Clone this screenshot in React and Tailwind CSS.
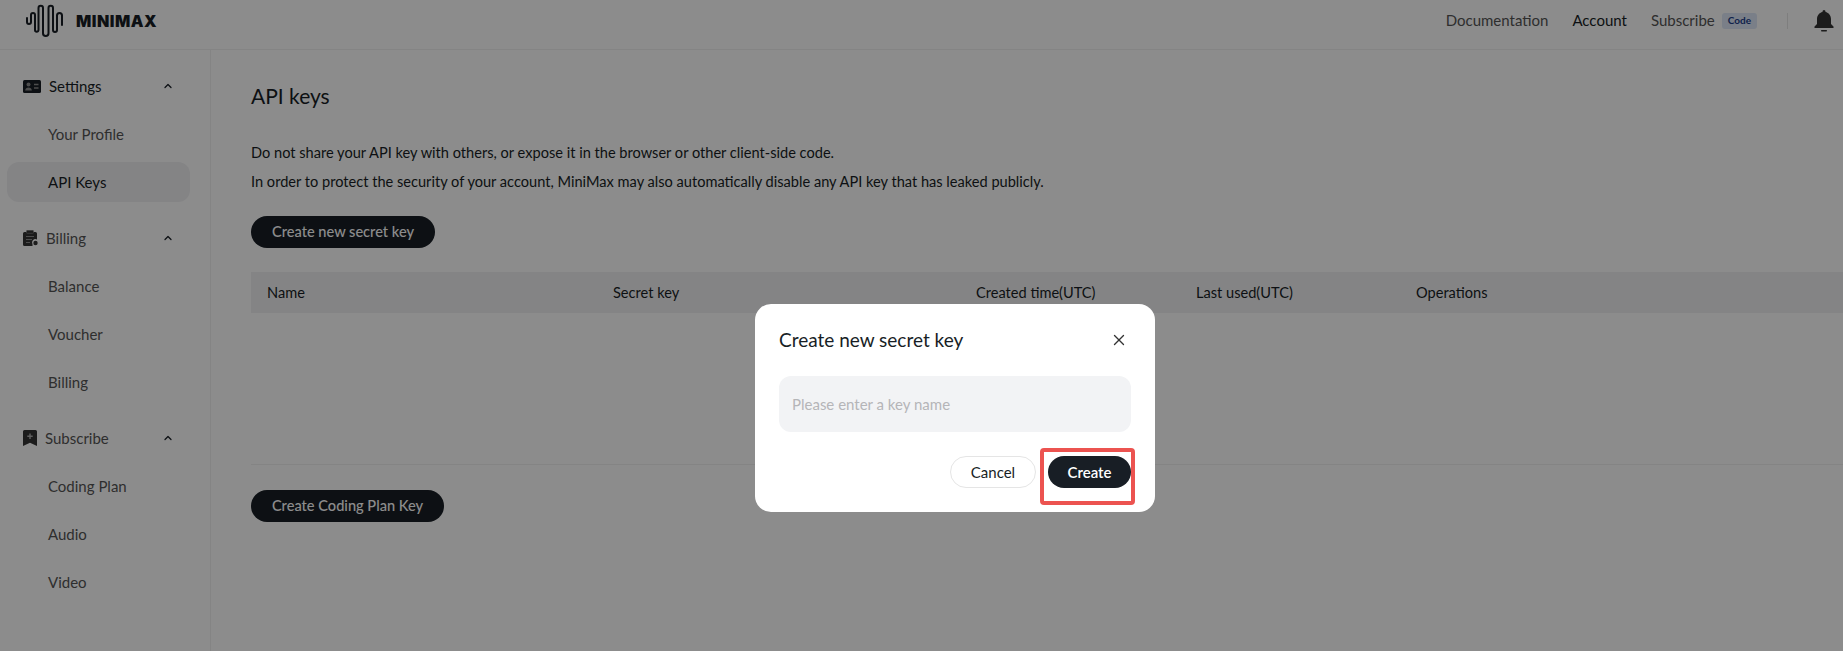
import React from 'react';
import { ChevronUp, X } from 'lucide-react';

const FONT = "font-['Lato','Noto_Sans',sans-serif]";

// Wave logo mark drawn as one serpentine line
function LogoMark() {
  return (
    <svg width="38" height="34" viewBox="0 0 38 34" fill="none" stroke="#181e25" strokeWidth="2" strokeLinecap="round" strokeLinejoin="round">
      <path d="M1 14v4a2 2 0 0 0 4 0v-7a2 2 0 0 1 4 0v15a1.750 1.750 0 0 0 3.500 0V4a2.250 2.250 0 0 1 4.500 0v25.250a2.750 2.750 0 0 0 5.500 0V4a2.250 2.250 0 0 1 4.500 0v22a2 2 0 0 0 4 0V11.500a2.500 2.500 0 0 1 5 0V21" />
    </svg>
  );
}

function IdIcon() {
  return (
    <svg width="18" height="13" viewBox="0 0 18 13">
      <rect width="18" height="13" rx="1.500" fill="#181e25" />
      <circle cx="5.500" cy="4.500" r="2" fill="#8c8c8c" />
      <path d="M2.200 10.500c0-2 1.500-3 3.300-3s3.300 1 3.300 3z" fill="#8c8c8c" />
      <path d="M11 4.500h4.500M11 8h4.500" stroke="#8c8c8c" strokeWidth="1.400" />
    </svg>
  );
}

function BillIcon() {
  return (
    <svg width="15" height="16" viewBox="0 0 15 16">
      <path d="M1.500 2h11A1.500 1.500 0 0 1 14 3.500v6a3.500 3.500 0 0 0-4.500 5V16h-8A1.500 1.500 0 0 1 0 14.500v-11A1.500 1.500 0 0 1 1.500 2z" fill="#333" />
      <rect x="3.500" y="0.300" width="7" height="3" rx="0.800" fill="#333" stroke="#8c8c8c" strokeWidth="0.600" />
      <path d="M3 6.500h8M3 9.500h6M3 12.500h4" stroke="#8c8c8c" strokeWidth="1.200" />
      <circle cx="12.500" cy="13" r="2.200" fill="#333" />
    </svg>
  );
}

function BookmarkPlus() {
  return (
    <svg width="14" height="16" viewBox="0 0 14 16">
      <path d="M1.500 0h11A1.500 1.500 0 0 1 14 1.500V16l-7-3.200L0 16V1.500A1.500 1.500 0 0 1 1.500 0z" fill="#333" />
      <path d="M7 3.500v5.500M4.300 6.200h5.400" stroke="#b0b0b0" strokeWidth="1.400" />
    </svg>
  );
}

function Bell() {
  return (
    <svg width="20" height="22" viewBox="0 0 20 22" fill="#333">
      <path d="M10 0a1.500 1.500 0 0 1 1.500 1.500v.4C14.700 2.600 17 5.300 17 9v5l2.500 2.500V18H.5v-1.500L3 14V9c0-3.700 2.300-6.400 5.500-7.100v-.4A1.500 1.500 0 0 1 10 0z" />
      <rect x="7" y="20" width="6" height="1.500" rx="0.700" />
    </svg>
  );
}

function SideGroup({ icon, label, dark, items }) {
  return (
    <div className="mb-[16px]">
      <div className="h-[40px] mb-[8px] flex items-center pl-[23px] pr-[36px]">
        <div className="flex items-center flex-1 gap-[8px]">
          {icon}
          <span className={`text-[15px] ${dark ? 'text-[#181e25]' : 'text-[#555]'}`}>{label}</span>
        </div>
        <ChevronUp size={12} strokeWidth={2.500} className="text-[#181e25]" />
      </div>
      {items.map((it) => (
        <div
          key={it}
          className={`h-[40px] mb-[8px] mx-[7px] w-[183px] rounded-[12px] pl-[41px] flex items-center text-[15px] ${it === 'API Keys' ? 'bg-[#f0f0f3] text-[#181e25]' : 'text-[#555]'}`}
        >
          {it}
        </div>
      ))}
    </div>
  );
}

export default function App() {
  return (
    <div className={`relative h-[651px] w-[1843px] overflow-hidden bg-white text-[#181e25] ${FONT}`}>
      <header className="h-[50px] border-b border-[#f0f0f0] flex items-center pl-[26px] pr-[9px] pb-[8px]">
        <LogoMark />
        <span className="ml-[12px] text-[16px] font-black tracking-[0.5px] font-['Inter',sans-serif]">MINIMAX</span>
        <nav className="ml-auto flex items-center text-[15px]">
          <span className="text-[#555]">Documentation</span>
          <span className="ml-[24px]">Account</span>
          <span className="ml-[24px] text-[#555]">Subscribe</span>
          <span className="ml-[7px] h-[16px] px-[6px] rounded-[3px] bg-[#dfe8f8] text-[#1c3f8a] text-[10px] font-bold flex items-center">Code</span>
          <span className="ml-[30px] w-px h-[16px] bg-[#e5e5e5]" />
          <span className="ml-[26px] flex"><Bell /></span>
        </nav>
      </header>

      <div className="flex h-[601px]">
        <aside className="w-[211px] shrink-0 border-r border-[#f0f0f0] pt-[16px]">
          <SideGroup icon={<IdIcon />} label="Settings" dark items={['Your Profile', 'API Keys']} />
          <SideGroup icon={<BillIcon />} label="Billing" items={['Balance', 'Voucher', 'Billing']} />
          <SideGroup icon={<BookmarkPlus />} label="Subscribe" items={['Coding Plan', 'Audio', 'Video']} />
        </aside>

        <main className="flex-1 pl-[40px] pt-[30px]">
          <h1 className="text-[21px] leading-[31px] font-normal">API keys</h1>
          <p className="mt-[32px] text-[14.6px] leading-[20px]">Do not share your API key with others, or expose it in the browser or other client-side code.</p>
          <p className="mt-[9px] text-[14.6px] leading-[20px]">In order to protect the security of your account, MiniMax may also automatically disable any API key that has leaked publicly.</p>
          <button className="mt-[24px] h-[32px] w-[184px] rounded-full bg-[#181e25] text-white text-[14.6px] font-medium flex items-center justify-center">Create new secret key</button>

          <div className="mt-[24px] h-[41px] bg-[#f0f0f3] flex items-center text-[14.6px] pl-[16px]">
            <span className="w-[346px]">Name</span>
            <span className="w-[363px]">Secret key</span>
            <span className="w-[220px]">Created time(UTC)</span>
            <span className="w-[220px]">Last used(UTC)</span>
            <span>Operations</span>
          </div>
          <div className="h-[152px] border-b border-[#f0f0f0]" />
          <button className="mt-[25px] h-[32px] w-[193px] rounded-full bg-[#181e25] text-white text-[14.6px] font-medium flex items-center justify-center">Create Coding Plan Key</button>
        </main>
      </div>

      {/* dimmed backdrop with the dialog over it */}
      <div className="absolute inset-0 bg-black/45" />
      <div className="absolute left-[755px] top-[304px] w-[400px] h-[208px] rounded-[16px] bg-white p-[24px]">
        <div className="h-[24px] flex items-center justify-between text-[19px] leading-[24px]">
          <span>Create new secret key</span>
          <X size={18} strokeWidth={1.800} className="mr-[3px] text-[#333]" />
        </div>
        <div className="mt-[24px] h-[56px] rounded-[12px] bg-[#f2f3f5] flex items-center px-[13px] text-[15px] text-[#b5b5b8]">Please enter a key name</div>
        <div className="mt-[24px] flex justify-end gap-[12px] relative">
          <button className="h-[32px] w-[86px] rounded-full border border-[#e5e5e5] text-[15px] flex items-center justify-center">Cancel</button>
          <button className="h-[32px] w-[83px] rounded-full bg-[#181e25] text-white text-[15px] font-semibold flex items-center justify-center">Create</button>
          <div className="absolute right-[-4px] top-[-8px] w-[95px] h-[57px] rounded-[4px] border-[4px] border-[#ec5350]" />
        </div>
      </div>
    </div>
  );
}
